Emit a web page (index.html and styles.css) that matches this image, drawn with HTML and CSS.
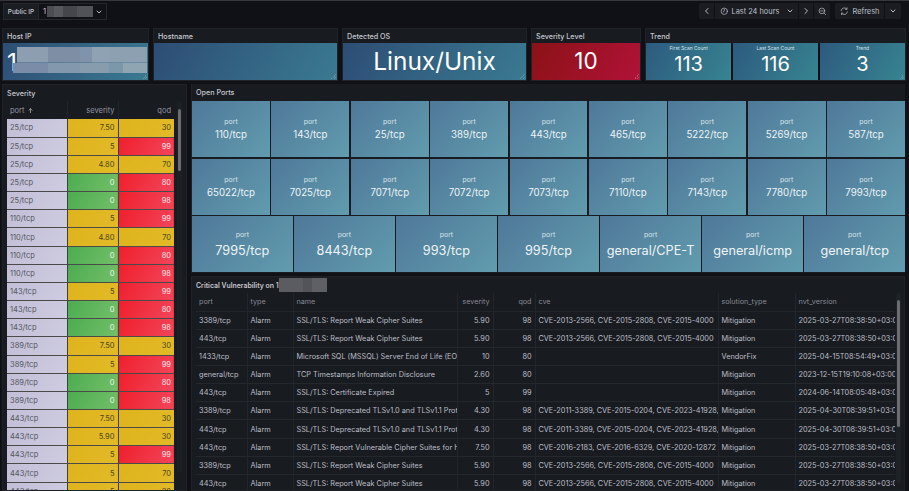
FILE: index.html
```html
<!DOCTYPE html>
<html lang="en">
<head>
<meta charset="utf-8">
<title>Host dashboard</title>
<link rel="stylesheet" href="styles.css">
</head>
<body>
<div class="app">
  <header class="topbar">
    <div class="varpick">
      <span class="varlabel">Public IP</span>
      <span class="varvalue">1<span class="mask mask-var"></span>
        <svg class="ico chev" viewBox="0 0 10 10"><path d="M3 4l2 2 2-2"/></svg>
      </span>
    </div>
    <div class="timepick">
      <div class="btngroup">
        <span class="btn b-nav"><svg class="ico" viewBox="0 0 10 10"><path d="M6 2.5L3.5 5 6 7.5"/></svg></span>
        <span class="btn b-range"><svg class="ico clock" viewBox="0 0 12 12"><circle cx="6" cy="6" r="4.5"/><path d="M6 3.2V6L4.4 7"/></svg>Last 24 hours<svg class="ico chev" viewBox="0 0 10 10"><path d="M3 4l2 2 2-2"/></svg></span>
        <span class="btn b-nav"><svg class="ico" viewBox="0 0 10 10"><path d="M4 2.5L6.5 5 4 7.5"/></svg></span>
        <span class="btn b-zoom"><svg class="ico clock" viewBox="0 0 12 12"><circle cx="5.5" cy="5.5" r="4"/><path d="M8.5 8.5L11 11M3.7 5.5h3.6"/></svg></span>
      </div>
      <div class="btngroup">
        <span class="btn b-refresh"><svg class="ico clock" viewBox="0 0 12 12"><path d="M1.5 5.2A4.6 4.6 0 0 1 9.6 3M10.5 6.8A4.6 4.6 0 0 1 2.4 9M9.9 1.2v2.1H7.8M2.1 10.8V8.7h2.1"/></svg>Refresh</span>
        <span class="btn b-caret"><svg class="ico chev" viewBox="0 0 10 10"><path d="M3 4l2 2 2-2"/></svg></span>
      </div>
    </div>
  </header>

  <section class="stats">
    <div class="panel">
      <h2 class="ptitle">Host IP</h2>
      <div class="bigtile blue"><span class="bigval left">1</span><span class="mask mask-host"></span></div>
    </div>
    <div class="panel">
      <h2 class="ptitle">Hostname</h2>
      <div class="bigtile blue"></div>
    </div>
    <div class="panel">
      <h2 class="ptitle">Detected OS</h2>
      <div class="bigtile blue"><span class="bigval">Linux/Unix</span></div>
    </div>
    <div class="panel">
      <h2 class="ptitle">Severity Level</h2>
      <div class="bigtile crimson"><span class="bigval small">10</span></div>
    </div>
    <div class="panel">
      <h2 class="ptitle">Trend</h2>
      <div class="trend">
        <div class="ttile"><span class="tlabel">First Scan Count</span><span class="tval">113</span></div>
        <div class="ttile"><span class="tlabel">Last Scan Count</span><span class="tval">116</span></div>
        <div class="ttile"><span class="tlabel">Trend</span><span class="tval">3</span></div>
      </div>
    </div>
  </section>

  <section class="main">
    <div class="panel sevpanel">
      <h2 class="ptitle tall">Severity</h2>
      <div class="sevbody">
        <table class="sev">
          <colgroup><col class="c-port"><col class="c-sev"><col class="c-qod"></colgroup>
          <thead><tr><th>port <svg class="ico arrow" viewBox="0 0 10 10"><path d="M5 8V2.5M2.8 4.7L5 2.5l2.2 2.2"/></svg></th><th class="r">severity</th><th class="r">qod</th></tr></thead>
          <tbody>
            <tr><td class="lav">25/tcp</td><td class="yel">7.50</td><td class="yel">30</td></tr>
            <tr><td class="lav">25/tcp</td><td class="yel">5</td><td class="red">99</td></tr>
            <tr><td class="lav">25/tcp</td><td class="yel">4.80</td><td class="yel">70</td></tr>
            <tr><td class="lav">25/tcp</td><td class="grn">0</td><td class="red">80</td></tr>
            <tr><td class="lav">25/tcp</td><td class="grn">0</td><td class="red">98</td></tr>
            <tr><td class="lav">110/tcp</td><td class="yel">5</td><td class="red">99</td></tr>
            <tr><td class="lav">110/tcp</td><td class="yel">4.80</td><td class="yel">70</td></tr>
            <tr><td class="lav">110/tcp</td><td class="grn">0</td><td class="red">80</td></tr>
            <tr><td class="lav">110/tcp</td><td class="grn">0</td><td class="red">98</td></tr>
            <tr><td class="lav">143/tcp</td><td class="yel">5</td><td class="red">99</td></tr>
            <tr><td class="lav">143/tcp</td><td class="grn">0</td><td class="red">80</td></tr>
            <tr><td class="lav">143/tcp</td><td class="grn">0</td><td class="red">98</td></tr>
            <tr><td class="lav">389/tcp</td><td class="yel">7.50</td><td class="yel">30</td></tr>
            <tr><td class="lav">389/tcp</td><td class="yel">5</td><td class="red">99</td></tr>
            <tr><td class="lav">389/tcp</td><td class="grn">0</td><td class="red">80</td></tr>
            <tr><td class="lav">389/tcp</td><td class="grn">0</td><td class="red">98</td></tr>
            <tr><td class="lav">443/tcp</td><td class="yel">7.50</td><td class="yel">30</td></tr>
            <tr><td class="lav">443/tcp</td><td class="yel">5.90</td><td class="yel">30</td></tr>
            <tr><td class="lav">443/tcp</td><td class="yel">5</td><td class="red">99</td></tr>
            <tr><td class="lav">443/tcp</td><td class="yel">5</td><td class="yel">70</td></tr>
            <tr><td class="lav">443/tcp</td><td class="yel">5</td><td class="yel">30</td></tr>
          </tbody>
        </table>
        <div class="scroll sev-scroll"><span class="thumb"></span></div>
      </div>
    </div>

    <div class="rightcol">
      <div class="panel portspanel">
        <h2 class="ptitle tall2">Open Ports</h2>
        <div class="portrow">
          <div class="port"><span class="plabel">port</span><span class="pval">110/tcp</span></div>
          <div class="port"><span class="plabel">port</span><span class="pval">143/tcp</span></div>
          <div class="port"><span class="plabel">port</span><span class="pval">25/tcp</span></div>
          <div class="port"><span class="plabel">port</span><span class="pval">389/tcp</span></div>
          <div class="port"><span class="plabel">port</span><span class="pval">443/tcp</span></div>
          <div class="port"><span class="plabel">port</span><span class="pval">465/tcp</span></div>
          <div class="port"><span class="plabel">port</span><span class="pval">5222/tcp</span></div>
          <div class="port"><span class="plabel">port</span><span class="pval">5269/tcp</span></div>
          <div class="port"><span class="plabel">port</span><span class="pval">587/tcp</span></div>
        </div>
        <div class="portrow">
          <div class="port"><span class="plabel">port</span><span class="pval">65022/tcp</span></div>
          <div class="port"><span class="plabel">port</span><span class="pval">7025/tcp</span></div>
          <div class="port"><span class="plabel">port</span><span class="pval">7071/tcp</span></div>
          <div class="port"><span class="plabel">port</span><span class="pval">7072/tcp</span></div>
          <div class="port"><span class="plabel">port</span><span class="pval">7073/tcp</span></div>
          <div class="port"><span class="plabel">port</span><span class="pval">7110/tcp</span></div>
          <div class="port"><span class="plabel">port</span><span class="pval">7143/tcp</span></div>
          <div class="port"><span class="plabel">port</span><span class="pval">7780/tcp</span></div>
          <div class="port"><span class="plabel">port</span><span class="pval">7993/tcp</span></div>
        </div>
        <div class="portrow large">
          <div class="port"><span class="plabel">port</span><span class="pval">7995/tcp</span></div>
          <div class="port"><span class="plabel">port</span><span class="pval">8443/tcp</span></div>
          <div class="port"><span class="plabel">port</span><span class="pval">993/tcp</span></div>
          <div class="port"><span class="plabel">port</span><span class="pval">995/tcp</span></div>
          <div class="port"><span class="plabel">port</span><span class="pval">general/CPE-T</span></div>
          <div class="port"><span class="plabel">port</span><span class="pval">general/icmp</span></div>
          <div class="port"><span class="plabel">port</span><span class="pval">general/tcp</span></div>
        </div>
      </div>

      <div class="panel vulnpanel">
        <h2 class="ptitle vt">Critical Vulnerability on 1<span class="mask mask-title"></span></h2>
        <div class="vulnbody">
          <table class="vuln">
            <colgroup><col class="v1"><col class="v2"><col class="v3"><col class="v4"><col class="v5"><col class="v6"><col class="v7"><col class="v8"></colgroup>
            <thead><tr><th>port</th><th>type</th><th>name</th><th class="r">severity</th><th class="r">qod</th><th>cve</th><th>solution_type</th><th>nvt_version</th></tr></thead>
            <tbody>
              <tr><td>3389/tcp</td><td>Alarm</td><td>SSL/TLS: Report Weak Cipher Suites</td><td class="r">5.90</td><td class="r">98</td><td>CVE-2013-2566, CVE-2015-2808, CVE-2015-4000</td><td>Mitigation</td><td>2025-03-27T08:38:50+03:00</td></tr>
              <tr><td>443/tcp</td><td>Alarm</td><td>SSL/TLS: Report Weak Cipher Suites</td><td class="r">5.90</td><td class="r">98</td><td>CVE-2013-2566, CVE-2015-2808, CVE-2015-4000</td><td>Mitigation</td><td>2025-03-27T08:38:50+03:00</td></tr>
              <tr><td>1433/tcp</td><td>Alarm</td><td>Microsoft SQL (MSSQL) Server End of Life (EOL)</td><td class="r">10</td><td class="r">80</td><td></td><td>VendorFix</td><td>2025-04-15T08:54:49+03:00</td></tr>
              <tr><td>general/tcp</td><td>Alarm</td><td>TCP Timestamps Information Disclosure</td><td class="r">2.60</td><td class="r">80</td><td></td><td>Mitigation</td><td>2023-12-15T19:10:08+03:00</td></tr>
              <tr><td>443/tcp</td><td>Alarm</td><td>SSL/TLS: Certificate Expired</td><td class="r">5</td><td class="r">99</td><td></td><td>Mitigation</td><td>2024-06-14T08:05:48+03:00</td></tr>
              <tr><td>3389/tcp</td><td>Alarm</td><td>SSL/TLS: Deprecated TLSv1.0 and TLSv1.1 Protocol</td><td class="r">4.30</td><td class="r">98</td><td>CVE-2011-3389, CVE-2015-0204, CVE-2023-41928,</td><td>Mitigation</td><td>2025-04-30T08:39:51+03:00</td></tr>
              <tr><td>443/tcp</td><td>Alarm</td><td>SSL/TLS: Deprecated TLSv1.0 and TLSv1.1 Protocol</td><td class="r">4.30</td><td class="r">98</td><td>CVE-2011-3389, CVE-2015-0204, CVE-2023-41928,</td><td>Mitigation</td><td>2025-04-30T08:39:51+03:00</td></tr>
              <tr><td>443/tcp</td><td>Alarm</td><td>SSL/TLS: Report Vulnerable Cipher Suites for HTTPS</td><td class="r">7.50</td><td class="r">98</td><td>CVE-2016-2183, CVE-2016-6329, CVE-2020-12872</td><td>Mitigation</td><td>2025-03-27T08:38:50+03:00</td></tr>
              <tr><td>3389/tcp</td><td>Alarm</td><td>SSL/TLS: Report Weak Cipher Suites</td><td class="r">5.90</td><td class="r">98</td><td>CVE-2013-2566, CVE-2015-2808, CVE-2015-4000</td><td>Mitigation</td><td>2025-03-27T08:38:50+03:00</td></tr>
              <tr><td>443/tcp</td><td>Alarm</td><td>SSL/TLS: Report Weak Cipher Suites</td><td class="r">5.90</td><td class="r">98</td><td>CVE-2013-2566, CVE-2015-2808, CVE-2015-4000</td><td>Mitigation</td><td>2025-03-27T08:38:50+03:00</td></tr>
            </tbody>
          </table>
          <div class="scroll vuln-scroll"><span class="thumb"></span></div>
        </div>
      </div>
    </div>
  </section>
</div>
</body>
</html>
```
FILE: styles.css
```css
* { box-sizing: border-box; }
html, body { margin: 0; height: 100%; overflow: hidden; background: #101116; }
body { font-family: Inter, "Liberation Sans", sans-serif; font-size: 7.9px; color: #c7c9d0; }
.app { height: 491px; overflow: hidden; border-top: 1px solid #35373b; padding: 2px 4px 0 2px; display: flex; flex-direction: column; }
.ico { width: 10px; height: 10px; fill: none; stroke: #b9bcc4; stroke-width: 1; stroke-linecap: round; stroke-linejoin: round; flex: none; }

.topbar { height: 25px; display: flex; justify-content: space-between; align-items: flex-start; padding-left: 1px; flex: none; }
.varpick { display: flex; height: 17px; border: 1px solid #24272d; background: #111217; }
.varlabel { width: 35px; display: flex; align-items: center; justify-content: center; background: #1a1d22; color: #c9cbd2; font-size: 6.4px; font-weight: 500; border-right: 1px solid #24272d; }
.varvalue { width: 67px; display: flex; align-items: center; padding-left: 4px; font-size: 7.5px; color: #c9cbd2; }
.varvalue .chev { margin-left: 1px; }
.mask { display: block; flex: none; }
.mask-var { width: 46px; height: 11px; margin-left: 1px; background: linear-gradient(90deg, #4b4d53 0 16%, #56585e 16% 34%, #44464c 34% 65%, #505258 65% 100%); }

.timepick { display: flex; gap: 5px; padding-right: 4px; }
.btngroup { display: flex; height: 16px; background: #1a1c21; border-radius: 1.5px; }
.btn { display: flex; align-items: center; justify-content: center; font-size: 7.4px; color: #bfc1c9; font-weight: 400; }
.btn + .btn { border-left: 1px solid #101116; }
.b-nav { width: 15px; }
.b-range { width: 84px; gap: 3px; padding: 0 3px 0 5px; justify-content: flex-start; }
.b-range .chev { margin-left: auto; }
.b-zoom { width: 17px; }
.b-refresh { width: 49px; gap: 4px; padding-left: 5px; justify-content: flex-start; }
.b-caret { width: 17px; }
.clock { width: 8.5px; height: 8.5px; }

.stats { display: grid; grid-template-columns: 147px 185px 185px 110px 261px; column-gap: 4px; height: 53px; flex: none; }
.panel { background: #181b20; border: 1px solid #1f2227; display: flex; flex-direction: column; min-width: 0; position: relative; }
.ptitle { margin: 0; height: 14px; flex: none; padding-left: 4px; font-size: 7.2px; font-weight: 500; color: #c6c8cf; display: flex; align-items: center; }
.bigtile { flex: 1; display: flex; align-items: center; justify-content: center; position: relative; }
.blue { background: linear-gradient(120deg, #2d4d74, #3a7a91); }
.crimson { background: linear-gradient(120deg, #8a1216, #b11238); }
.bigtile::after, .trend::after { content: ""; position: absolute; right: 1px; bottom: 1px; width: 5px; height: 5px; background: linear-gradient(135deg, transparent 50%, #a9b6bf 50% 60%, transparent 60% 75%, #a9b6bf 75% 85%, transparent 85%); opacity: .4; }
.bigval { font-size: 24.4px; line-height: 1; color: #fff; font-weight: 400; }
.bigval.small { font-size: 22.5px; }
.bigval.left { position: absolute; left: 4px; top: 7px; }
.mask-host { position: absolute; left: 10px; right: 1px; top: 4px; bottom: 7px; background:
  linear-gradient(90deg, transparent 0 3%, #8d9eb1 3% 26%, #7d8ea5 26% 50%, #7f93aa 50% 59%, #8fa2b3 59% 72%, #8ca0b2 72% 100%) top/100% 60% no-repeat,
  linear-gradient(90deg, #7a8ca7 0 26%, #8498ad 26% 50%, #879dae 50% 72%, #7d97aa 72% 82%, #90a5b2 82% 100%) bottom/100% 40% no-repeat; }
.trend { flex: 1; display: grid; grid-template-columns: repeat(3, 1fr); gap: 1.5px; position: relative; background: #101116; }
.ttile { background: linear-gradient(120deg, #2d5a7e, #378491); display: flex; flex-direction: column; align-items: center; color: #fff; }
.tlabel { font-size: 4.9px; line-height: 5px; margin-top: 3px; color: #d7e2e8; }
.tval { font-size: 20px; line-height: 20px; margin-top: 3px; font-weight: 400; }

.main { flex: 1; display: grid; grid-template-columns: 185px 714px; column-gap: 4px; padding-top: 3px; min-height: 0; }
.sevpanel { overflow: hidden; }
.tall { height: 16px; }
.sevbody { display: flex; padding-left: 4px; flex: 1; min-height: 0; }
table { border-collapse: collapse; table-layout: fixed; }
th { font-weight: 400; text-align: left; white-space: nowrap; overflow: hidden; }
td { white-space: nowrap; overflow: hidden; padding: 0; }
.sev { width: 167px; height: 0; flex: none; }
.c-port { width: 60px; } .c-sev { width: 51px; } .c-qod { width: 56px; }
.sev th { height: 18px; padding: 0 3px; color: #9296a0; font-size: 7.5px; border-right: 1px solid #22252b; }
.sev th:last-child { border-right: 0; }
.sev th.r, .r { text-align: right; }
.arrow { width: 7px; height: 7px; vertical-align: -1px; }
.sev td { height: 18.17px; padding: 0 3px; font-size: 7.5px; border-bottom: 1px solid #4a4a4a; border-right: 1px solid #3f3f3f; }
.lav { background: linear-gradient(120deg, #c1bed6, #cecce0); color: #55565f; }
.yel { background: linear-gradient(120deg, #deb41c, #e2ba28); color: #4d4620; text-align: right; }
.grn { background: linear-gradient(120deg, #4cac4f, #73bf69); color: #edf5ea; text-align: right; }
.red { background: linear-gradient(120deg, #ef1f2c, #f2455a); color: #fbe4e6; text-align: right; }
.sev td:last-child { border-right: 0; }
.scroll { width: 5px; background: #22252a; border-radius: 2px; position: relative; flex: none; }
.thumb { position: absolute; left: 1px; width: 3px; background: #6a6c72; border-radius: 2px; display: block; }
.sev-scroll { height: 372px; margin-left: 3px; background: #1c1f24; }
.sev-scroll .thumb { top: 8px; height: 62px; }

.rightcol { display: flex; flex-direction: column; gap: 3px; min-width: 0; min-height: 0; }
.portspanel { flex: none; height: 189px; border: 0; border-left: 1px solid #1f2227; }
.tall2 { height: 17px; }
.portrow { display: flex; gap: 1.4px; height: 56px; margin-bottom: 1.5px; flex: none; }
.port { flex: 1 1 0; min-width: 0; display: flex; flex-direction: column; align-items: center; background: linear-gradient(135deg, #4f7899, #619cae); color: #eef4f6; }
.plabel { font-size: 6.9px; line-height: 8px; margin-top: 17px; color: #d7e4ea; }
.pval { font-size: 9.7px; line-height: 12px; margin-top: 3px; }
.large .plabel { margin-top: 15px; }
.large .pval { font-size: 12.7px; line-height: 16px; margin-top: 4px; white-space: nowrap; }

.vulnpanel { flex: 1; min-height: 0; overflow: hidden; background: #181b20; }
.vt { height: 16px; font-size: 6.9px; font-weight: 600; flex: none; }
.mask-title { width: 48px; height: 14px; background: linear-gradient(90deg, #5b5c61 0 50%, #53545a 50% 68%, #5f6065 68%); }
.vulnbody { display: flex; padding-left: 4px; flex: 1; min-height: 0; }
.vuln { width: 699px; flex: none; height: 0; }
.v1 { width: 51px; } .v2 { width: 46px; } .v3 { width: 164px; } .v4 { width: 36px; } .v5 { width: 42px; } .v6 { width: 183px; } .v7 { width: 77px; } .v8 { width: 100px; }
.vuln th { height: 18px; padding: 0 3px; color: #878a93; font-size: 7.2px; border-right: 1px solid #22252b; border-bottom: 1px solid #22252b; }
.vuln th:last-child, .vuln td:last-child { border-right: 0; }
.vuln td { height: 18.17px; padding: 0 3px; color: #bcbfc6; font-size: 7.3px; border-bottom: 1px solid #24272c; border-right: 1px solid #22252b; }
.vuln-scroll { height: 190px; margin-left: 1px; background: #1e2126; }
.vuln-scroll .thumb { top: 7px; height: 127px; }
```
